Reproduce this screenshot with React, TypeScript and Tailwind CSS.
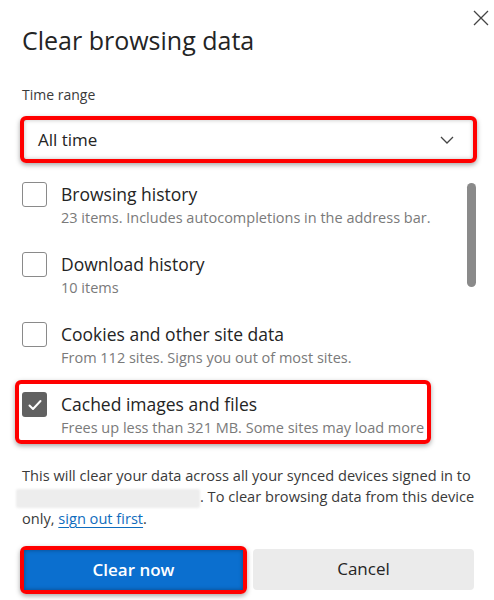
import React from 'react';

// ===========================================
// Clear browsing data dialog
// ===========================================

interface DataRow {
  title: string;
  detail: string;
  checked?: boolean;
  highlight?: boolean;
}

const rows: DataRow[] = [
  { title: 'Browsing history', detail: '23 items. Includes autocompletions in the address bar.' },
  { title: 'Download history', detail: '10 items' },
  { title: 'Cookies and other site data', detail: 'From 112 sites. Signs you out of most sites.' },
  {
    title: 'Cached images and files',
    detail: 'Frees up less than 321 MB. Some sites may load more',
    checked: true,
    highlight: true,
  },
];

function Checkbox({ checked }: { checked?: boolean }) {
  if (checked) {
    return (
      <div className="flex h-[25px] w-[25px] shrink-0 items-center justify-center rounded-[3px] bg-[#616161]">
        <svg width="16" height="16" viewBox="0 0 16 16" fill="none">
          <path d="M2.5 8.5 L6 12 L13.5 4" stroke="#fff" strokeWidth="2" strokeLinecap="round" strokeLinejoin="round" />
        </svg>
      </div>
    );
  }
  return <div className="h-[25px] w-[25px] shrink-0 rounded-[3px] border border-[#8a8a8a] bg-white" />;
}

function Row({ row }: { row: DataRow }) {
  const body = (
    <div className="flex items-start gap-[14px]">
      <Checkbox checked={row.checked} />
      <div className="flex flex-col">
        <span className="text-[17.5px] leading-[25px] text-[#242424]">{row.title}</span>
        <span className="mt-[1px] text-[14.5px] leading-[20px] text-[#7a7a7a]">{row.detail}</span>
      </div>
    </div>
  );

  if (row.highlight) {
    return (
      <div className="-mx-[7px] -mt-[12px] w-fit rounded-[6px] border-[4px] border-[#ff0000] px-[3px] pt-[8px] pb-[2px] shadow-[0_2px_5px_rgba(0,0,0,0.35)]">
        {body}
      </div>
    );
  }
  return body;
}

export default function App() {
  return (
    <div className="h-[600px] w-[494px] overflow-hidden bg-white font-['Open_Sans','Noto_Sans',sans-serif]">
      {/* Header */}
      <div className="flex items-start justify-between pt-[10px] pl-[22px] pr-[5px]">
        <h1 className="mt-[14px] text-[25px] leading-[32px] text-[#242424]">Clear browsing data</h1>
        <button aria-label="Close" className="h-[16px] w-[16px]">
          <svg width="16" height="16" viewBox="0 0 16 16" fill="none">
            <path d="M1 1 L15 15 M15 1 L1 15" stroke="#444" strokeWidth="1.3" />
          </svg>
        </button>
      </div>

      {/* Time range */}
      <div className="px-[20px] pt-[29px]">
        <div className="pl-[2px] text-[14px] leading-[20px] text-[#3a3a3a]">Time range</div>
        <div className="mt-[11px] w-[457px] rounded-[6px] border-[4px] border-[#ff0000] shadow-[0_2px_5px_rgba(0,0,0,0.35)]">
          <div className="flex h-[39px] items-center justify-between pl-[14px] pr-[19px] shadow-[inset_0_0_4px_rgba(0,0,0,0.25)]">
            <span className="text-[17px] text-[#242424]">All time</span>
            <svg width="14" height="8" viewBox="0 0 14 8" fill="none">
              <path d="M1 1 L7 7 L13 1" stroke="#444" strokeWidth="1.3" />
            </svg>
          </div>
        </div>
      </div>

      {/* Data list with scrollbar */}
      <div className="flex pt-[19px] pl-[22px] pr-[18px]">
        <div className="flex flex-1 flex-col gap-[24px]">
          {rows.map((row) => (
            <Row key={row.title} row={row} />
          ))}
        </div>
        <div className="mt-[1px] h-[104px] w-[9px] rounded-full bg-[#8a8a8a]" />
      </div>

      {/* Sync note */}
      <div className="pl-[22px] pr-[16px] pt-[21px] text-[14.6px] leading-[21px] text-[#3a3a3a]">
        This will clear your data across all your synced devices signed in to{' '}
        <span className="-ml-[6px] inline-block h-[19px] w-[184px] rounded-[2px] bg-[#ededed] align-middle blur-[1px]" />
        . To clear browsing data from this device only,{' '}
        <a className="text-[#0f6cbd] underline decoration-[1px] underline-offset-[3px]">sign out first</a>.
      </div>

      {/* Actions */}
      <div className="flex gap-[6px] px-[20px] pt-[17px]">
        <div className="w-[228px] rounded-[6px] border-[4px] border-[#ff0000] shadow-[0_2px_5px_rgba(0,0,0,0.35)]">
          <button className="h-[40px] w-full bg-[#0b6fcf] text-[17px] font-semibold text-white shadow-[inset_0_0_4px_rgba(0,0,0,0.35)]">
            Clear now
          </button>
        </div>
        <button className="mt-[3px] h-[41px] w-[222px] rounded-[4px] bg-[#ebebeb] text-[17px] text-[#242424]">
          Cancel
        </button>
      </div>
    </div>
  );
}
